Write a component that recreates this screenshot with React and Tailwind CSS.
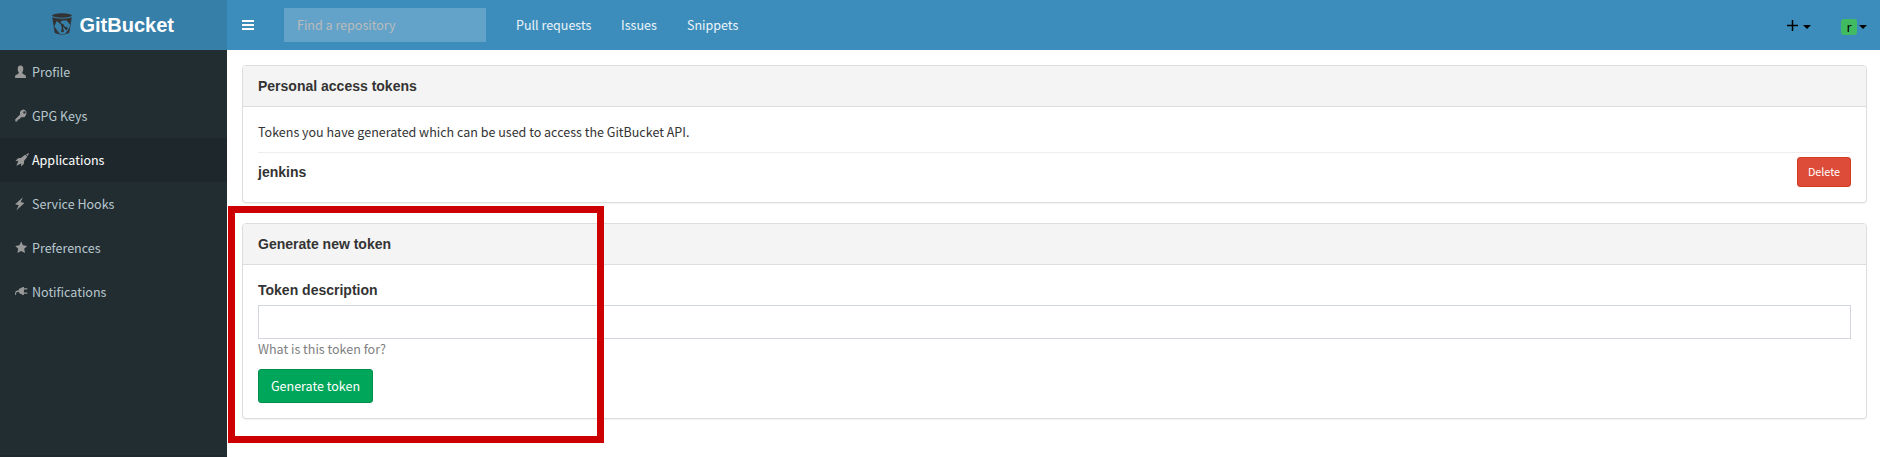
import React from "react";

const PersonIcon = () => (
  <svg className="block" width="14" height="14" viewBox="0 0 14 14" fill="currentColor">
    <path d="M5.500.500C3.500.500 2.700 2 2.700 4c0 1.400.5 2.600 1 3.200v1.100C3.400 9.100.100 9.900.100 11.300V13h10.800v-1.700c0-1.400-3.300-2.200-3.600-3V7.200c.5-.6 1-1.800 1-3.200 0-2-.8-3.500-2.800-3.500z" />
  </svg>
);

const KeyIcon = () => (
  <svg className="block" width="14" height="14" viewBox="0 0 14 14" fill="currentColor">
    <path
      fillRule="evenodd"
      d="M8.600.500a3.700 3.700 0 0 0-3.500 4.900L.300 10.200v2.200h1.900v-1.200h1.300v-1.200h1.200l1.600-2A3.700 3.700 0 1 0 8.600.500zM9.400 2.200a1.200 1.200 0 1 1 0 2.400 1.200 1.200 0 0 1 0-2.400z"
    />
  </svg>
);

const RocketIcon = () => (
  <svg className="block" width="14" height="14" viewBox="0 0 14 14" fill="currentColor">
    <path d="M13.800.200C13.400.200 12 .700 11 1.300l1.700 1.700C13.300 2 13.800.700 13.800.200zM10.300 1.700C8.700 2.700 6.900 4.100 6 5 5.300 4.800 3.200 4.900 2.400 5.700L.400 8.200l3-.500-.700 1.700L1.300 12.800l3.300-1.600 1.700-.700-.500 3 2.500-2c.8-.8.9-2.900.7-3.600.9-.9 2.300-2.700 3.300-4.300z" />
  </svg>
);

const BoltIcon = () => (
  <svg className="block" width="14" height="14" viewBox="0 0 14 14" fill="currentColor">
    <path d="M7.900.300.100 7.200 3.800 8.300 1.300 13.500 9.400 6 5.700 5.100z" />
  </svg>
);

const StarIcon = () => (
  <svg className="block" width="14" height="14" viewBox="0 0 14 14" fill="currentColor">
    <path d="M6.200.500 8 4.300 12.200 4.900 9.200 7.800 10 12.100 6.200 10 2.400 12.100 3.200 7.800.200 4.900 4.400 4.300z" />
  </svg>
);

const PlugIcon = () => (
  <svg className="block" width="14" height="14" viewBox="0 0 14 14" fill="currentColor">
    <path d="M8.900 2v1.200h3.400v1.300H8.900v3h3.400v1.300H8.900V10H7.500L6.300 8.900C4.800 8.900 3.900 8 3.700 6.700 2.100 6.600 1.100 7.300 1.100 8.700v1.200H.100V8.300C.100 6.400 1.500 5.300 3.700 5.300 4 4 4.900 3.100 6.300 3.100L7.500 2z" />
  </svg>
);

const BucketLogo = () => (
  <svg className="block" width="22" height="24" viewBox="0 0 22 24">
    <ellipse cx="11" cy="3.500" rx="9.900" ry="2.200" fill="#333" />
    <path d="M1.200 5.300C5 7.200 17 7.200 20.800 5.300L18.300 20.800C15 23.200 7 23.200 3.700 20.800z" fill="#333" />
    <path d="M6 8.500H15.500L19 12.500 18.600 15.500 14.500 21.500C13 22.200 10 22.200 8.500 21.500L3.300 14.500z" fill="#367fa9" />
    <path d="M6.500 8.500 11.800 13.500M11.500 13v6M11.600 13.300 15 16.500" stroke="#333" strokeWidth="1.500" fill="none" />
    <path d="M5 8 12 8 8.700 10.600z" fill="#333" />
    <circle cx="11.500" cy="13.200" r="1.300" fill="#333" />
    <circle cx="11.500" cy="18.700" r="1.500" fill="#333" />
    <circle cx="15.300" cy="16.500" r="1.400" fill="#333" />
  </svg>
);

const Caret = () => (
  <svg className="block" width="8" height="4" viewBox="0 0 8 4">
    <path d="M0 0h8L4 4z" fill="#000" />
  </svg>
);

const menu = [
  { label: "Profile", Icon: PersonIcon },
  { label: "GPG Keys", Icon: KeyIcon },
  { label: "Applications", Icon: RocketIcon, active: true },
  { label: "Service Hooks", Icon: BoltIcon },
  { label: "Preferences", Icon: StarIcon },
  { label: "Notifications", Icon: PlugIcon },
];

function Panel({ title, className, children }) {
  return (
    <section className={`flex flex-col rounded border border-[#ddd] bg-white shadow-[0_1px_1px_rgba(0,0,0,0.05)] ${className}`}>
      <h2 className="h-[41px] shrink-0 rounded-t-[3px] border-b border-[#ddd] bg-[#f4f4f4] px-[15px] font-['Liberation_Sans',sans-serif] text-[14px] leading-[40px] font-bold">
        {title}
      </h2>
      <div className="flex flex-col px-[15px]">{children}</div>
    </section>
  );
}

export default function App() {
  return (
    <div className="relative flex h-[457px] flex-col overflow-hidden bg-white font-['Noto_Sans_CJK_JP',sans-serif] text-[12.53px] leading-5 text-[#333]">
      <header className="flex h-[50px] shrink-0 bg-[#3c8dbc] text-white">
        <div className="flex w-[227px] bg-[#367fa9] pt-[12px] pl-[51px]">
          <BucketLogo />
          <span className="pl-[6.5px] font-['Liberation_Sans',sans-serif] text-[20px] leading-[26px] font-bold">GitBucket</span>
        </div>
        <div className="flex flex-1 items-center pl-[15px]">
          <div className="flex w-[12px] flex-col gap-[2px]">
            <i className="h-[2px] bg-white" />
            <i className="h-[2px] bg-white" />
            <i className="h-[2px] bg-white" />
          </div>
          <input
            className="ml-[30px] h-[34px] w-[202px] bg-white/20 px-[13px] pb-px placeholder:text-[#bbb] placeholder:opacity-100"
            placeholder="Find a repository"
          />
          <nav className="flex flex-1 pl-[30px] text-white/90">
            <a className="w-[105px]">Pull requests</a>
            <a className="w-[66px]">Issues</a>
            <a>Snippets</a>
          </nav>
          <div className="flex items-center pr-[30px]">
            <svg className="block" width="11" height="11" viewBox="0 0 11 11">
              <path d="M5.500 0v11M0 5.500h11" stroke="#000" strokeWidth="1.500" />
            </svg>
            <div className="pt-[3px] pl-[5px]">
              <Caret />
            </div>
          </div>
          <div className="flex items-center pt-[3px] pr-[13px]">
            <span className="h-4 w-4 rounded-[3px] bg-[#41bb62] text-center text-[13px] leading-[15px] text-black">r</span>
            <div className="pl-[2px]">
              <Caret />
            </div>
          </div>
        </div>
      </header>

      <div className="flex flex-1">
        <aside className="w-[227px] shrink-0 border-b-2 border-[#1e282d] bg-[#222d32]">
          <ul>
            {menu.map(({ label, Icon, active }) => (
              <li
                key={label}
                className={`flex h-[44px] items-center pl-[15px] ${active ? "bg-[#1e282c] text-white" : "text-[#b8c7ce]"}`}
              >
                <span className="w-[17px] text-[#999]">
                  <Icon />
                </span>
                {label}
              </li>
            ))}
          </ul>
        </aside>

        <main className="flex-1 pt-[15px] pr-[13px] pl-[15px]">
          <Panel title="Personal access tokens" className="h-[138px]">
            <p className="pt-[15px] leading-5">Tokens you have generated which can be used to access the GitBucket API.</p>
            <div className="mt-[10px] flex items-start justify-between border-t border-[#eee] pt-[4px]">
              <strong className="pt-[5px] font-['Liberation_Sans',sans-serif] text-[14px] leading-5">jenkins</strong>
              <button className="h-[30px] w-[54px] rounded-[3px] border border-[#d73925] bg-[#dd4b39] pb-px text-[10.8px] leading-none text-white">
                Delete
              </button>
            </div>
          </Panel>

          <Panel title="Generate new token" className="mt-5 h-[196px]">
            <label className="pt-[15px] font-['Liberation_Sans',sans-serif] text-[14px] leading-5 font-bold">Token description</label>
            <input className="mt-[5px] h-[34px] border border-[#d2d6de] bg-white px-3" />
            <p className="leading-5 text-[#808080]">What is this token for?</p>
            <button className="mt-[10px] h-[34px] w-[115px] rounded-[3px] border border-[#008d4c] bg-[#00a65a] leading-5 text-white">
              Generate token
            </button>
          </Panel>
        </main>
      </div>

      <div className="pointer-events-none absolute top-[206px] left-[228px] h-[237px] w-[376px] border-[7px] border-[#c00]" />
    </div>
  );
}
